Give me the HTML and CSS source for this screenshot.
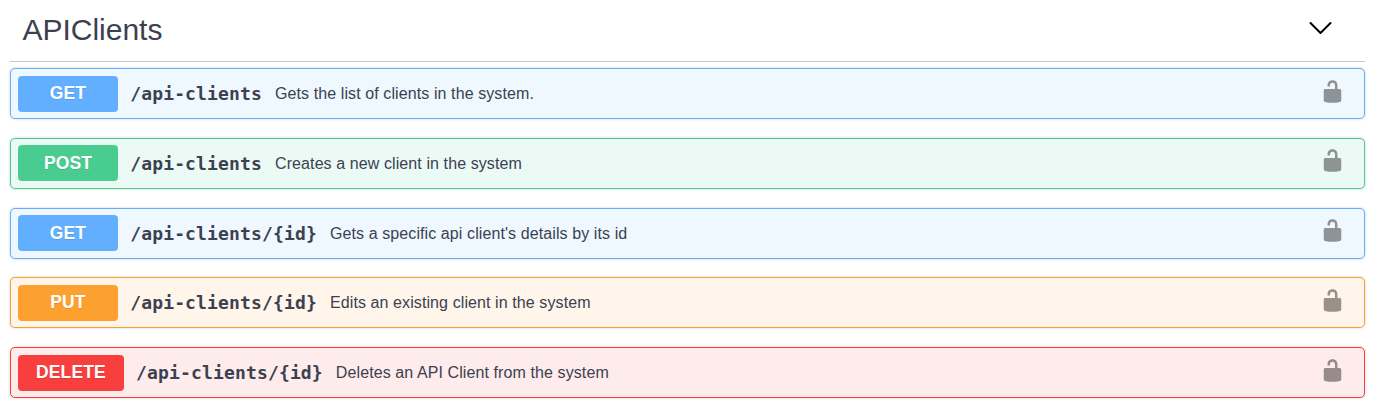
FILE: index.html
```
<!DOCTYPE html>
<html lang="en">
<head>
<meta charset="utf-8">
<title>APIClients</title>
<link rel="stylesheet" href="styles.css">
</head>
<body>
<svg class="sprite" width="0" height="0"><defs>
<symbol id="unlocked" viewBox="0 0 20 20"><path d="M15.8 8H14V5.600C14 2.703 12.665 1 10 1 7.334 1 6 2.703 6 5.600V6h2v-.801C8 3.754 8.797 3 10 3c1.203 0 2 .754 2 2.199V8H4c-.553 0-1 .646-1 1.199V17c0 .549.428 1.139.951 1.307l1.197.387C5.672 18.861 6.550 19 7.100 19h5.800c.549 0 1.428-.139 1.951-.307l1.196-.387c.524-.167.953-.757.953-1.306V9.199C17 8.646 16.352 8 15.800 8z"/></symbol>
</defs></svg>
<main class="section">
<header class="tag"><h1 class="tag-name">APIClients</h1>
<svg class="arrow" viewBox="0 0 23 14"><path d="M1.500 2l10 10L21.500 2"/></svg></header>
<div class="op get"><span class="method">GET</span><span class="path">/api-clients</span><span class="desc">Gets the list of clients in the system.</span><svg class="lock"><use href="#unlocked"/></svg></div>
<div class="op post"><span class="method">POST</span><span class="path">/api-clients</span><span class="desc">Creates a new client in the system</span><svg class="lock"><use href="#unlocked"/></svg></div>
<div class="op get"><span class="method">GET</span><span class="path">/api-clients/{id}</span><span class="desc">Gets a specific api client's details by its id</span><svg class="lock"><use href="#unlocked"/></svg></div>
<div class="op put"><span class="method">PUT</span><span class="path">/api-clients/{id}</span><span class="desc">Edits an existing client in the system</span><svg class="lock"><use href="#unlocked"/></svg></div>
<div class="op delete"><span class="method">DELETE</span><span class="path">/api-clients/{id}</span><span class="desc">Deletes an API Client from the system</span><svg class="lock"><use href="#unlocked"/></svg></div>
</main>
</body>
</html>
```
FILE: styles.css
```
* { box-sizing: border-box; }
body { margin: 0; background: #fff; color: #3b4151; font-family: "Liberation Sans", Arial, sans-serif; }
.sprite { display: block; }
.section { margin: 0 12px 0 10px; }
.tag { display: flex; align-items: center; justify-content: space-between; height: 62px; padding: 0 33px 4px 12.4px; margin-bottom: 6px; border-bottom: 1px solid rgba(59,65,81,.3); }
.tag-name { margin: 2px 0 0; font-size: 30px; font-weight: 400; line-height: 36px; }
.arrow { width: 23px; height: 14px; margin-bottom: 1px; fill: none; stroke: #000; stroke-width: 2; stroke-linecap: round; stroke-linejoin: round; }
.op { display: flex; align-items: center; height: 51px; margin-bottom: 18.75px; padding: 0 19px 0 7px; border: 1px solid; border-radius: 5px; box-shadow: 0 0 3px rgba(0,0,0,.19); }
.method { min-width: 100px; height: 36px; padding: .6px 18px 0; border-radius: 4px; color: #fff; font-size: 17.5px; font-weight: 700; letter-spacing: .14px; line-height: 34px; text-align: center; text-shadow: 0 1px 0 rgba(0,0,0,.1); }
.path { margin: 1.2px 0 0 12.2px; font: 600 18px/24px "DejaVu Sans Mono", monospace; letter-spacing: .15px; }
.desc { margin: 1.2px 0 0 13px; font-size: 16px; letter-spacing: .095px; line-height: 24px; }
.lock { width: 25px; height: 25px; margin: -5px 0 0 auto; opacity: .4; fill: #000; }
.get { border-color: #61affe; background: #eff7ff; }
.get .method { background: #61affe; }
.post { border-color: #49cc90; background: #ebfaf4; }
.post .method { background: #49cc90; }
.put { border-color: #fca130; background: #fff5ea; }
.put .method { background: #fca130; }
.delete { border-color: #f93e3e; background: #feebeb; }
.delete .method { background: #f93e3e; }
```
